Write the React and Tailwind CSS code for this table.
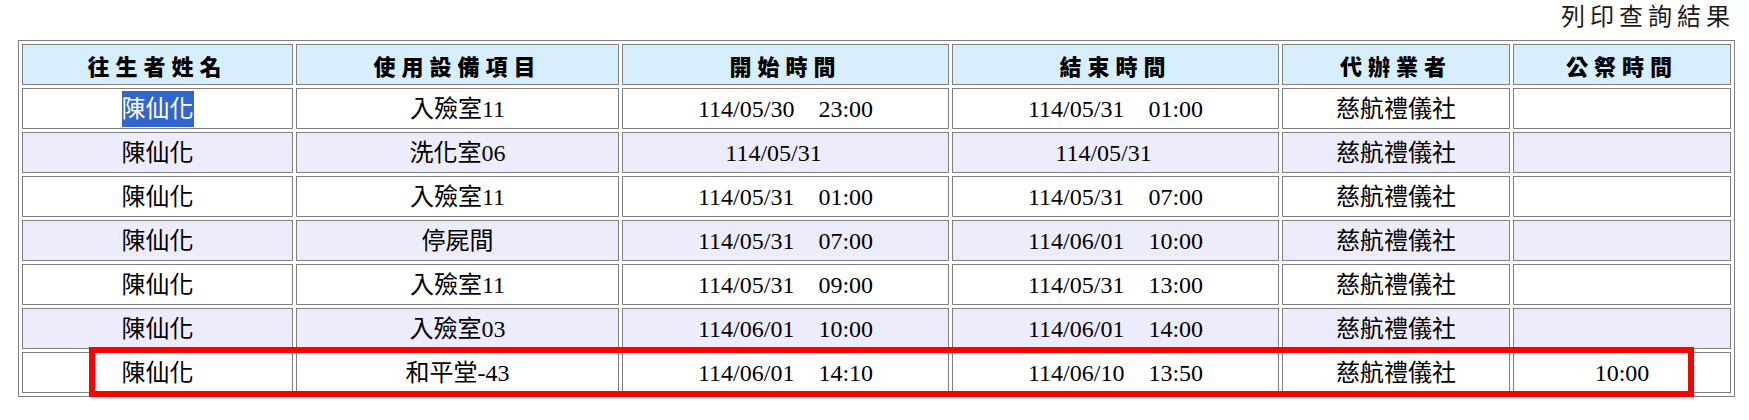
import React from 'react';

const columns = [
  { label: '往生者姓名', width: 'w-[271px]' },
  { label: '使用設備項目', width: 'w-[323px]' },
  { label: '開始時間', width: 'w-[327px]' },
  { label: '結束時間', width: 'w-[327px]' },
  { label: '代辦業者', width: 'w-[228px]' },
  { label: '公祭時間', width: 'w-[218px]' }
];

const GAP = '\u00a0\u00a0\u00a0\u00a0';

const records = [
  { name: '陳仙化', item: '入殮室11', start: ['114/05/30', '23:00'], end: ['114/05/31', '01:00'], agent: '慈航禮儀社', memorial: '', selected: true },
  { name: '陳仙化', item: '洗化室06', start: ['114/05/31', ''], end: ['114/05/31', ''], agent: '慈航禮儀社', memorial: '' },
  { name: '陳仙化', item: '入殮室11', start: ['114/05/31', '01:00'], end: ['114/05/31', '07:00'], agent: '慈航禮儀社', memorial: '' },
  { name: '陳仙化', item: '停屍間', start: ['114/05/31', '07:00'], end: ['114/06/01', '10:00'], agent: '慈航禮儀社', memorial: '' },
  { name: '陳仙化', item: '入殮室11', start: ['114/05/31', '09:00'], end: ['114/05/31', '13:00'], agent: '慈航禮儀社', memorial: '' },
  { name: '陳仙化', item: '入殮室03', start: ['114/06/01', '10:00'], end: ['114/06/01', '14:00'], agent: '慈航禮儀社', memorial: '' },
  { name: '陳仙化', item: '和平堂-43', start: ['114/06/01', '14:10'], end: ['114/06/10', '13:50'], agent: '慈航禮儀社', memorial: '10:00' }
];

const cellClass = 'h-[41px] p-0 border border-[#808080] text-center align-middle leading-[36px]';

const App = () => {
  return (
    <div className="relative w-[1749px] h-[420px] bg-white text-black">
      {/* Title */}
      <div className="ml-[18px] w-[1717px] h-[40px] text-right text-[24px] leading-[30px] tracking-[5px] text-[#1a1a1a] font-['Noto_Sans_CJK_TC',sans-serif]">
        列印查詢結果
      </div>

      {/* Result table */}
      <table className="ml-[18px] w-[1717px] table-fixed border-separate border-spacing-[3px] border border-[#808080]">
        <thead>
          <tr>
            {columns.map((col) => (
              <th
                key={col.label}
                className={`${col.width} ${cellClass} bg-[#d7effc] font-black text-[22px] tracking-[6px] font-['Noto_Sans_CJK_TC',sans-serif]`}
              >
                {col.label}
              </th>
            ))}
          </tr>
        </thead>
        <tbody className="text-[24px] font-['Liberation_Serif','Noto_Sans_CJK_TC',serif]">
          {records.map((row, index) => {
            const bg = index % 2 === 1 ? 'bg-[#edecfc]' : 'bg-white';
            return (
              <tr key={index}>
                <td className={`${cellClass} ${bg}`}>
                  {row.selected ? (
                    <span className="inline-block bg-[#3366cc] text-white leading-[36px]">{row.name}</span>
                  ) : (
                    row.name
                  )}
                </td>
                <td className={`${cellClass} ${bg}`}>{row.item}</td>
                <td className={`${cellClass} ${bg}`}>{row.start[0] + GAP + row.start[1]}</td>
                <td className={`${cellClass} ${bg}`}>{row.end[0] + GAP + row.end[1]}</td>
                <td className={`${cellClass} ${bg}`}>{row.agent}</td>
                <td className={`${cellClass} ${bg}`}>{row.memorial}</td>
              </tr>
            );
          })}
        </tbody>
      </table>

      {/* Red highlight box over the last row */}
      <div className="absolute left-[89px] top-[347px] w-[1605px] h-[50px] border-[6px] border-[#ff0000] pointer-events-none" />
    </div>
  );
};

export default App;
